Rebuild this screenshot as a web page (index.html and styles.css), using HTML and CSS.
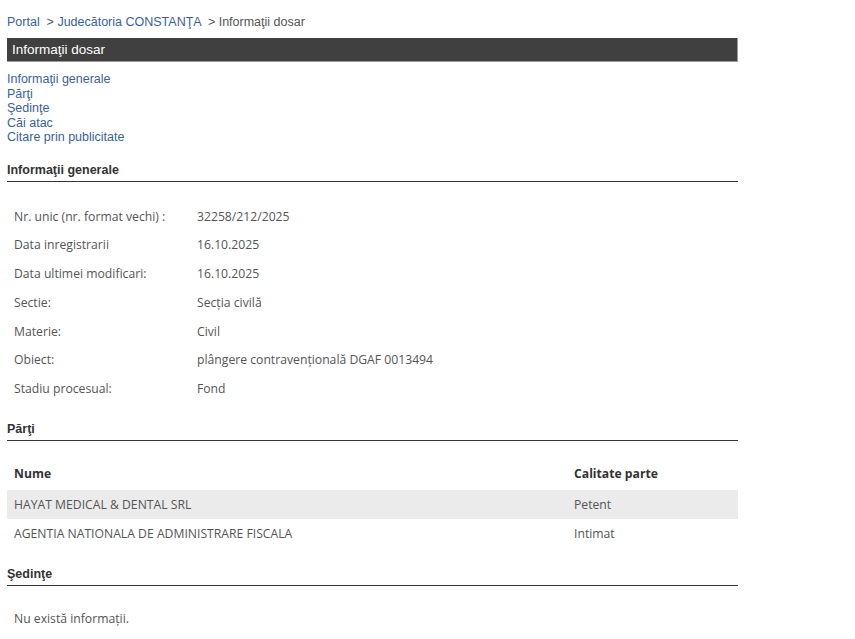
FILE: index.html
```html
<!DOCTYPE html>
<html lang="ro">
<head>
  <meta charset="UTF-8">
  <link rel="stylesheet" href="styles.css">
  <title>Informaţii dosar</title>
</head>
<body>
  <div class="page">
    <!-- Breadcrumb -->
    <div class="crumbs">
      <a href="#">Portal</a> &nbsp;&gt; <a href="#">Judecătoria CONSTANŢA</a> &nbsp;&gt; Informaţii dosar
    </div>

    <div class="title-bar">Informaţii dosar</div>

    <!-- Anchors -->
    <div class="anchors">
      <a href="#generale">Informaţii generale</a>
      <a href="#parti">Părţi</a>
      <a href="#sedinte">Şedinţe</a>
      <a href="#cai">Căi atac</a>
      <a href="#citare">Citare prin publicitate</a>
    </div>

    <!-- Informatii generale -->
    <h3 class="section-head" id="generale">Informaţii generale</h3>
    <div class="info">
      <div class="info-row"><span class="label">Nr. unic (nr. format vechi) :</span><span>32258/212/2025</span></div>
      <div class="info-row"><span class="label">Data inregistrarii</span><span>16.10.2025</span></div>
      <div class="info-row"><span class="label">Data ultimei modificari:</span><span>16.10.2025</span></div>
      <div class="info-row"><span class="label">Sectie:</span><span>Secția civilă</span></div>
      <div class="info-row"><span class="label">Materie:</span><span>Civil</span></div>
      <div class="info-row"><span class="label">Obiect:</span><span>plângere contravențională DGAF 0013494</span></div>
      <div class="info-row"><span class="label">Stadiu procesual:</span><span>Fond</span></div>
    </div>

    <!-- Parti -->
    <h3 class="section-head" id="parti">Părţi</h3>
    <div class="parties">
      <div class="party-row party-header"><span>Nume</span><span>Calitate parte</span></div>
      <div class="party-row shaded"><span>HAYAT MEDICAL &amp; DENTAL SRL</span><span>Petent</span></div>
      <div class="party-row"><span>AGENTIA NATIONALA DE ADMINISTRARE FISCALA</span><span>Intimat</span></div>
    </div>

    <!-- Sedinte -->
    <h3 class="section-head" id="sedinte">Şedinţe</h3>
    <p class="empty">Nu există informaţii.</p>
  </div>
</body>
</html>
```

FILE: styles.css
```css
/* General Styles */
body {
  margin: 0;
  font-family: "Liberation Sans", Arial, sans-serif;
  font-size: 12.5px;
  color: #333;
  background: #fff;
}

a {
  color: #3a5f9e;
  text-decoration: none;
}

.page {
  width: 731px;
  padding-left: 7px;
}

/* Breadcrumb */
.crumbs {
  padding-top: 15px;
  height: 23px;
  line-height: 14px;
  color: #555;
}

/* Title bar */
.title-bar {
  height: 23px;
  line-height: 23px;
  padding-left: 5px;
  background: #404040;
  border-right: 1px solid #999;
  border-bottom: 1px solid #999;
  color: #fff;
  font-size: 13.5px;
}

.anchors {
  display: flex;
  flex-direction: column;
  padding-top: 10px;
  line-height: 14.5px;
}

/* Section headings */
.section-head {
  margin: 0;
  padding: 18px 0 4px;
  line-height: 14px;
  font-size: 12.5px;
  font-weight: bold;
  color: #333;
  border-bottom: 1px solid #333;
}

.info {
  padding: 21px 0 0;
  font-family: "Open Sans", Tahoma, sans-serif;
  font-size: 12.2px;
  color: #555;
}

.info-row {
  display: grid;
  grid-template-columns: 183px 1fr;
  height: 28.8px;
  line-height: 28.8px;
  padding-left: 7px;
}

/* Parties */
.parties {
  padding: 17px 0 1px;
  font-family: "Open Sans", Tahoma, sans-serif;
  font-size: 12.2px;
  color: #555;
}

.party-row {
  display: grid;
  grid-template-columns: 560px 1fr;
  height: 29px;
  line-height: 29px;
  padding-left: 7px;
}

.party-header {
  height: 32px;
  line-height: 31px;
  font-weight: bold;
  color: #333;
}

.shaded {
  background: #ebebeb;
}

.empty {
  margin: 0;
  padding: 24px 0 0 7px;
  font-family: "Open Sans", Tahoma, sans-serif;
  font-size: 12.2px;
  color: #555;
}
```
